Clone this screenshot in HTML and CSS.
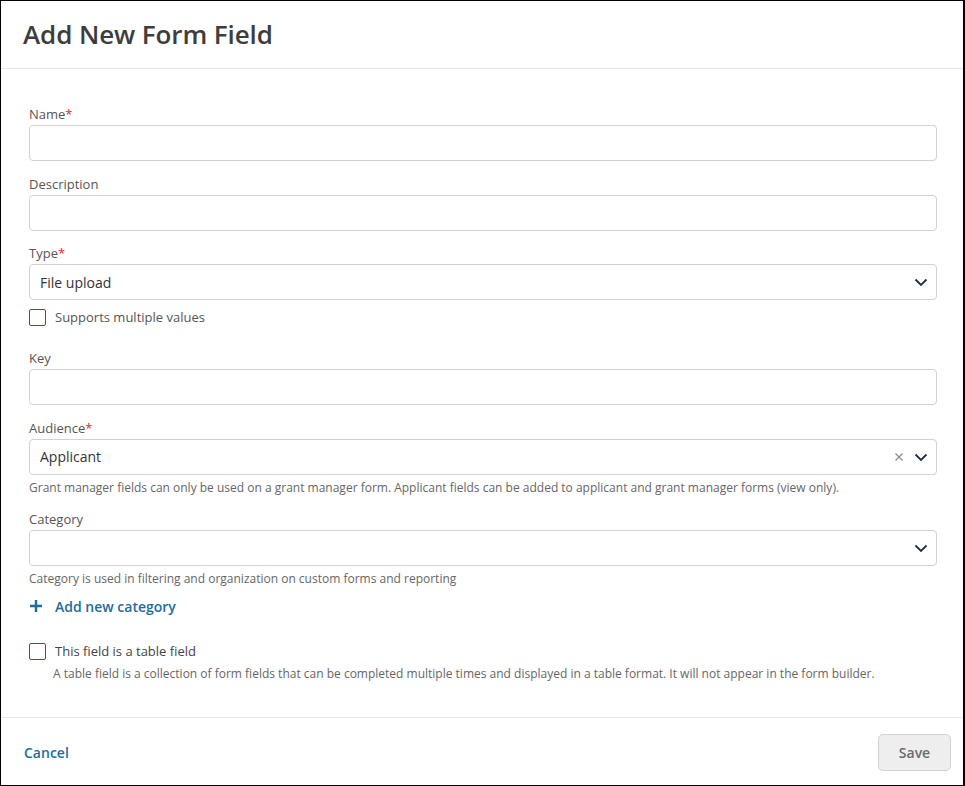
FILE: index.html
```html
<!DOCTYPE html>
<html>
<head>
<meta charset="utf-8">
<link rel="stylesheet" href="styles.css">
</head>
<body>
<div class="dialog">
  <div class="header"><h1 class="title">Add New Form Field</h1></div>
  <div class="body">
    <div class="group">
      <label class="label">Name<span class="req">*</span></label>
      <div class="input"></div>
    </div>
    <div class="group">
      <label class="label">Description</label>
      <div class="input"></div>
    </div>
    <div class="group">
      <label class="label">Type<span class="req">*</span></label>
      <div class="input select"><span class="value">File upload</span>
        <svg class="chev" width="14" height="9" viewBox="0 0 14 9"><path d="M1.5 1.5 L7 7 L12.5 1.5" fill="none" stroke="#1e2f45" stroke-width="1.8"/></svg>
      </div>
      <div class="check-row"><span class="box"></span><span class="check-text">Supports multiple values</span></div>
    </div>
    <div class="group gap-top">
      <label class="label">Key</label>
      <div class="input"></div>
    </div>
    <div class="group">
      <label class="label">Audience<span class="req">*</span></label>
      <div class="input select"><span class="value">Applicant</span>
        <svg class="clear" width="10" height="10" viewBox="0 0 10 10"><path d="M1.5 1.5 L8.5 8.5 M8.5 1.5 L1.5 8.5" fill="none" stroke="#8a8a8a" stroke-width="1.2"/></svg>
        <svg class="chev" width="14" height="9" viewBox="0 0 14 9"><path d="M1.5 1.5 L7 7 L12.5 1.5" fill="none" stroke="#1e2f45" stroke-width="1.8"/></svg>
      </div>
      <div class="help">Grant manager fields can only be used on a grant manager form. Applicant fields can be added to applicant and grant manager forms (view only).</div>
    </div>
    <div class="group cat">
      <label class="label">Category</label>
      <div class="input select"><span class="value"></span>
        <svg class="chev" width="14" height="9" viewBox="0 0 14 9"><path d="M1.5 1.5 L7 7 L12.5 1.5" fill="none" stroke="#1e2f45" stroke-width="1.8"/></svg>
      </div>
      <div class="help">Category is used in filtering and organization on custom forms and reporting</div>
      <a class="add-link"><svg width="14" height="14" viewBox="0 0 14 14"><path d="M7 1 V13 M1 7 H13" stroke="#1d6d9b" stroke-width="2.4"/></svg><span>Add new category</span></a>
    </div>
    <div class="table-field">
      <div class="check-row"><span class="box"></span><span class="check-text dark">This field is a table field</span></div>
      <div class="help indent">A table field is a collection of form fields that can be completed multiple times and displayed in a table format. It will not appear in the form builder.</div>
    </div>
  </div>
  <div class="footer">
    <a class="cancel">Cancel</a>
    <button class="save">Save</button>
  </div>
</div>
</body>
</html>
```
FILE: styles.css
```css
* { box-sizing: border-box; }
html, body { margin: 0; padding: 0; }
body {
  font-family: "Open Sans", "Noto Sans", sans-serif;
  background: #fff;
  color: #555;
}
.dialog {
  width: 965px;
  height: 786px;
  border: 1px solid #000;
  border-right-width: 2px;
  display: flex;
  flex-direction: column;
}
.header {
  height: 68px;
  border-bottom: 1px solid #e6e6e6;
  padding: 0 22px;
  display: flex;
  align-items: center;
}
.title {
  margin: 0;
  font-size: 26px;
  font-weight: 600;
  color: #3d3d3d;
  letter-spacing: -0.1px;
  line-height: 1;
  padding-bottom: 1px;
}
.body {
  flex: 1;
  padding: 36px 26px 0 28px;
}
.group { margin-bottom: 13.5px; }
.gap-top { margin-top: 22px; }
.cat { margin-top: 14.5px; }
.label {
  display: block;
  font-size: 13px;
  line-height: 18px;
  height: 18px;
  margin-bottom: 2px;
  color: #555;
}
.req { color: #e0262a; }
.input {
  height: 36px;
  border: 1px solid #cfd2d6;
  border-radius: 4px;
  background: #fff;
}
.select {
  display: flex;
  align-items: center;
  padding: 0 4px 0 10px;
}
.value {
  flex: 1;
  font-size: 14px;
  color: #333;
}
.chev { margin: 1px 4px 0 8px; }
.clear { margin-right: 2px; }
.check-row {
  display: flex;
  align-items: center;
  height: 20px;
  margin-top: 7px;
}
.box {
  width: 17px;
  height: 17px;
  border: 1.5px solid #215f8e;
  border-radius: 2px;
  margin-right: 9px;
}
.check-text { font-size: 13px; color: #555; }
.check-text.dark { color: #444; }
.help {
  font-size: 12px;
  line-height: 16px;
  margin-top: 5px;
  color: #666;
}
.help.indent { margin-left: 24px; margin-top: 5px; }
.add-link {
  display: flex;
  align-items: center;
  margin-top: 9px;
  height: 20px;
  font-size: 14px;
  font-weight: 600;
  color: #1d6d9b;
}
.add-link svg { margin-right: 12px; }
.table-field { margin-top: 25px; }
.table-field .check-row { margin-top: 0; }
.footer {
  height: 68px;
  border-top: 1px solid #e6e6e6;
  display: flex;
  align-items: center;
  justify-content: space-between;
  padding: 2px 12px 0 23px;
}
.cancel {
  font-size: 14px;
  font-weight: 600;
  color: #1d6d9b;
}
.save {
  width: 73px;
  height: 37px;
  border: 1px solid #d3d3d3;
  border-radius: 5px;
  background: #eeeeee;
  font-family: "Open Sans", sans-serif;
  font-size: 14px;
  font-weight: 600;
  color: #6b6b6b;
}
```
